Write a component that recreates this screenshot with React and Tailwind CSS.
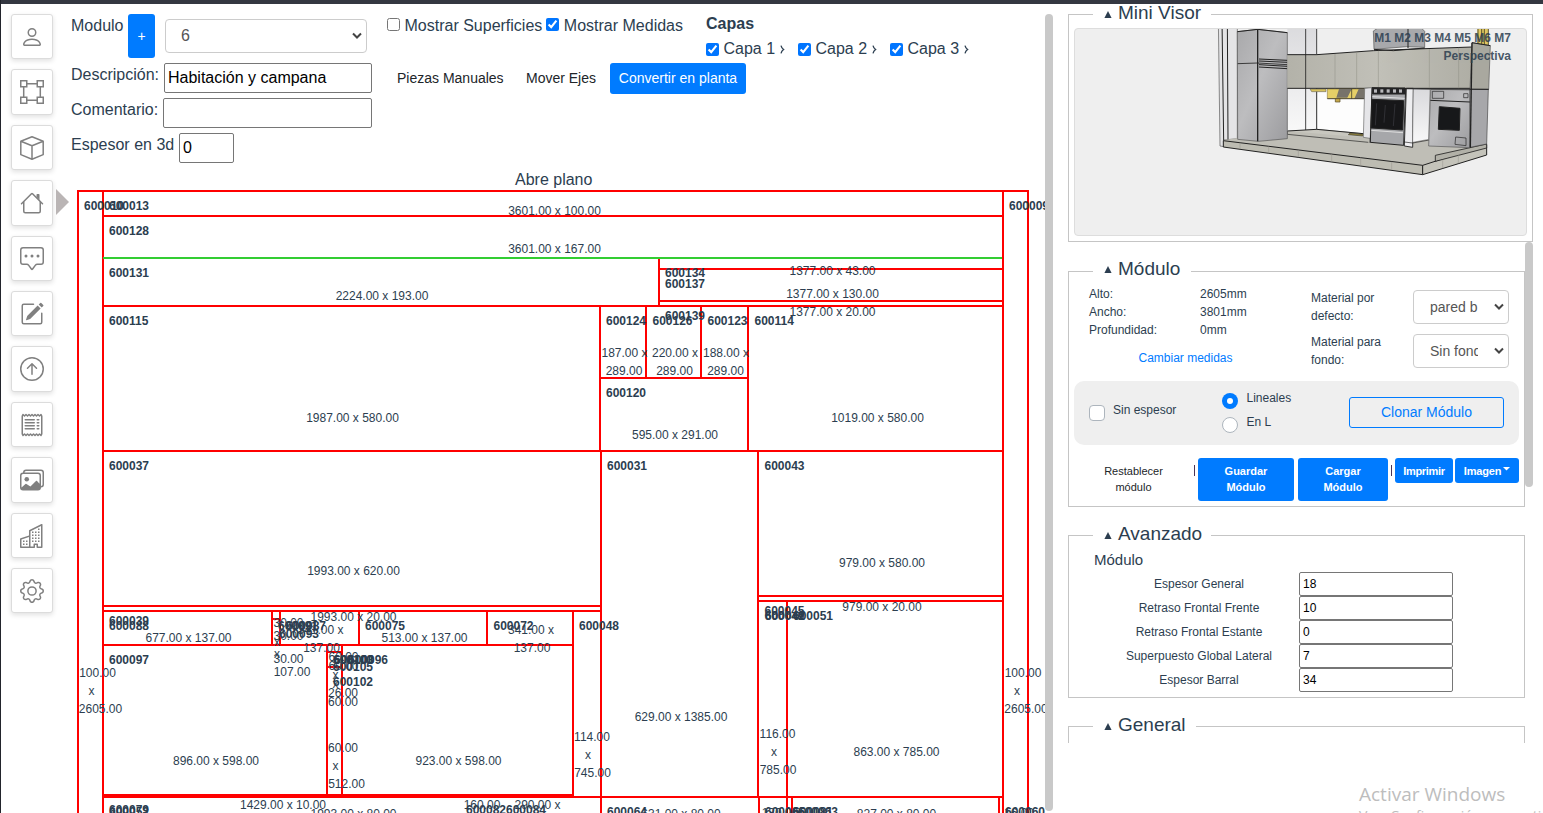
import React from 'react';
import { BsPerson, BsChatSquareDots, BsPencilSquare, BsArrowUpCircle, BsReceipt, BsImages, BsBuildings, BsGear } from 'react-icons/bs';

const VectorIcon = () => (
  <svg width="24" height="24" viewBox="0 0 24 24" fill="none" stroke="currentColor" strokeWidth="1.5">
    <rect x="0.75" y="0.75" width="6" height="6" /><rect x="17.25" y="0.75" width="6" height="6" />
    <rect x="0.75" y="17.25" width="6" height="6" /><rect x="17.25" y="17.25" width="6" height="6" />
    <path d="M6.7 3.7h10.6M6.7 20.3h10.6M3.7 6.7v10.6M20.3 6.7v10.6" />
  </svg>
);

const CubeIcon = () => (
  <svg width="24" height="24" viewBox="0 0 24 24" fill="none" stroke="currentColor" strokeWidth="1.5" strokeLinejoin="round">
    <path d="M12 .8 23.2 5.2v13.4L12 23.2.8 18.6V5.2zM.8 5.2 12 9.7l11.2-4.5M12 9.7v13.5" />
  </svg>
);

const HouseIcon = () => (
  <svg width="24" height="24" viewBox="0 0 16 16" fill="currentColor">
    <path fillRule="evenodd" d="M2 13.5V7h1v6.5a.5.5 0 0 0 .5.5h9a.5.5 0 0 0 .5-.5V7h1v6.5a1.5 1.5 0 0 1-1.5 1.5h-9A1.5 1.5 0 0 1 2 13.5zm11-11V6l-2-2V2.5a.5.5 0 0 1 .5-.5h1a.5.5 0 0 1 .5.5z" />
    <path fillRule="evenodd" d="M7.293 1.5a1 1 0 0 1 1.414 0l6.647 6.646a.5.5 0 0 1-.708.708L8 2.207 1.354 8.854a.5.5 0 1 1-.708-.708L7.293 1.5z" />
  </svg>
);

const TOOLS = [BsPerson, VectorIcon, CubeIcon, HouseIcon, BsChatSquareDots, BsPencilSquare, BsArrowUpCircle, BsReceipt, BsImages, BsBuildings, BsGear];

function Sidebar() {
  return (
    <nav className="flex w-[71px] shrink-0 flex-col gap-[10px] pl-[11px] pt-[10px]">
      {TOOLS.map((Icon, i) => (
        <button key={i} className="relative flex h-[45.4px] w-[42px] shrink-0 items-center justify-center rounded-[3px] border border-[#dcdcdc] bg-white pt-[0.6px] text-[24px] text-[#808080] shadow-[0_2px_5px_rgba(0,0,0,0.12)]">
          <Icon />
          {i === 3 && (
            <svg className="absolute left-[44px] top-[8px]" width="13" height="27" viewBox="0 0 13 27" fill="#bab5b5"><path d="M0 0 13 13 0 26z" /></svg>
          )}
        </button>
      ))}
    </nav>
  );
}

/* [x1, y1, x2, y2] */
const EDGES = [
  [78, 190, 78, 813], [77, 191, 1029, 191], [1028, 190, 1028, 813], [103, 190, 103, 813], [1003, 190, 1003, 813],
  [103, 216, 1003, 216], [659, 258, 659, 306], [659, 269, 1003, 269], [659, 301, 1003, 301], [103, 306, 1003, 306],
  [600, 306, 600, 451], [646, 306, 646, 378], [701, 306, 701, 378], [748, 306, 748, 451], [600, 378, 749, 378],
  [103, 451, 1003, 451], [601, 451, 601, 813], [758, 451, 758, 797], [758, 596, 1003, 596], [758, 601, 1003, 601],
  [787, 601, 787, 797], [103, 606, 601, 606], [103, 611, 601, 611], [103, 645, 573, 645], [272, 611, 272, 645],
  [280, 611, 280, 645], [272, 619, 280, 619], [359, 611, 359, 645], [487, 611, 487, 645], [573, 611, 573, 797],
  [327, 645, 327, 795], [342, 645, 342, 795], [327, 652, 342, 652], [327, 667, 342, 667], [103, 795, 574, 795],
  [103, 797, 1003, 797], [759, 797, 759, 813], [787, 797, 787, 813], [792, 797, 792, 813], [999, 797, 999, 813],
];

/* [left x, centre y, piece code] */
const CODES = [
  [84, 206, '600010'], [109, 206, '600013'], [1009, 206, '600009'], [109, 231, '600128'], [109, 273, '600131'],
  [665, 273, '600134'], [665, 284, '600137'], [665, 316, '600139'], [109, 321, '600115'], [606, 321, '600124'],
  [652.5, 321, '600126'], [707.5, 321, '600123'], [754.5, 321, '600114'], [606, 393, '600120'], [109, 466, '600037'],
  [607, 466, '600031'], [764.5, 466, '600043'], [764.5, 611, '600045'], [764.5, 616, '600049'], [765, 616, '600042'],
  [793, 616, '600051'], [109, 621, '600039'], [109, 626, '600088'], [278, 626, '600091'], [279, 634, '600093'],
  [286, 626, '600087'], [365, 626, '600075'], [493.5, 626, '600072'], [579, 626, '600048'], [109, 660, '600097'],
  [333, 660, '600100'], [334, 660, '600103'], [348, 660, '600096'], [333, 667, '600105'], [333, 682, '600102'],
  [109, 810, '600079'], [109, 812, '600052'], [466, 810, '600082'], [506, 810, '600084'], [607, 812, '600064'],
  [765, 812, '600066'], [793, 812, '600081'], [798, 812, '600063'], [1005, 812, '600060'],
];

/* [centre x, centre y, measure] */
const SIZES = [
  [554.5, 211, '3601.00 x 100.00'], [554.5, 249, '3601.00 x 167.00'], [382, 296, '2224.00 x 193.00'],
  [832.5, 271, '1377.00 x 43.00'], [832.5, 294, '1377.00 x 130.00'], [832.5, 312, '1377.00 x 20.00'],
  [352.5, 418, '1987.00 x 580.00'], [624.5, 353, '187.00 x'], [624, 371, '289.00'], [675, 353, '220.00 x'],
  [674.5, 371, '289.00'], [726, 353, '188.00 x'], [725.5, 371, '289.00'], [675, 435, '595.00 x 291.00'],
  [877.5, 418, '1019.00 x 580.00'], [353.5, 571, '1993.00 x 620.00'], [882, 563, '979.00 x 580.00'],
  [882, 607, '979.00 x 20.00'], [681, 717, '629.00 x 1385.00'], [353.5, 617, '1993.00 x 20.00'],
  [188.5, 638, '677.00 x 137.00'], [424.5, 638, '513.00 x 137.00'], [531, 630, '341.00 x'], [532, 648, '137.00'],
  [320.5, 630, '341.00 x'], [321.5, 648, '137.00'], [288.5, 623, '30.00'], [288.5, 636, '30.00'],
  [277, 642, 'x'], [277, 654, 'x'], [288.5, 659, '30.00'], [292, 672, '107.00'],
  [97.5, 673, '100.00'], [91.5, 691, 'x'], [100.5, 709, '2605.00'], [1023, 673, '100.00'], [1017, 691, 'x'],
  [1026, 709, '2605.00'], [343.5, 657, '60.00'], [343.5, 666, '60.00'], [335.5, 675, 'x'], [335.5, 684, 'x'],
  [343, 693, '26.00'], [343, 702, '60.00'], [343, 748, '60.00'], [335.5, 766, 'x'], [346.5, 784, '512.00'],
  [216, 761, '896.00 x 598.00'], [458.5, 761, '923.00 x 598.00'], [592, 737, '114.00'], [588, 755, 'x'],
  [592.5, 773, '745.00'], [777.5, 734, '116.00'], [774, 752, 'x'], [778, 770, '785.00'], [896.5, 752, '863.00 x 785.00'],
  [283, 805, '1429.00 x 10.00'], [353.5, 814, '1993.00 x 80.00'], [482, 805, '160.00'], [537.5, 805, '290.00 x'],
  [681, 814, '631.00 x 80.00'], [780, 813, '130.00'], [896.5, 814, '827.00 x 80.00'], [1019, 813, '16.00'],
];

function Plan() {
  return (
    <svg className="-ml-[11px] block" width="985" height="623" viewBox="60 190 985 623" fontFamily="Liberation Sans, Arial, sans-serif" fontSize="12" fill="#2c3e50">
      {EDGES.map(([x1, y1, x2, y2], i) => <line key={i} x1={x1} y1={y1} x2={x2} y2={y2} stroke="#ff0000" strokeWidth="2" />)}
      <line x1="103" y1="258" x2="1002" y2="258" stroke="#32cd32" strokeWidth="2" />
      {CODES.map(([x, y, t], i) => <text key={i} x={x} y={y + 4} fontWeight="700">{t}</text>)}
      {SIZES.map(([x, y, t], i) => <text key={i} x={x} y={y + 4} textAnchor="middle">{t}</text>)}
    </svg>
  );
}

function Chevron({ className }) {
  return <svg className={className} width="10" height="8" viewBox="0 0 10 8" fill="none" stroke="#444" strokeWidth="2"><path d="M1 1.5 5 5.5 9 1.5" /></svg>;
}

const Layer = ({ n }) => (
  <label className="flex w-[92px] items-center">
    <input type="checkbox" defaultChecked className="mr-[4.5px] size-[13px]" />Capa {n}
    <svg className="ml-[5px]" width="5" height="9" viewBox="0 0 5 9" fill="none" stroke="currentColor" strokeWidth="1.3"><path d="M1 .7Q1.6 3.2 3.6 4.5 1.6 5.8 1 8.3" /></svg>
  </label>
);

function Header() {
  const field = 'h-[30px] rounded-[2px] border border-[#767676] px-[3px] text-black outline-none';
  const row = 'flex h-[35px] shrink-0';
  return (
    <header className="flex h-[186px] pt-[10px]">
      <div className="flex w-[316px] shrink-0 flex-col">
        <div className="flex h-[49px] shrink-0 items-start">
          <span className="w-[57px] leading-[23px]">Modulo</span>
          <button className="h-[44px] w-[27px] rounded-[3px] bg-[#007bff] text-[14px] text-white">+</button>
          <div className="ml-[10px] mt-[5px] flex h-[34px] w-[202px] items-center justify-between rounded-[4px] border border-[#ccc] pl-[15px] pr-[4px] text-[#555]">6<Chevron /></div>
        </div>
        <div className={row}><span className="w-[93px] leading-[23px]">Descripción:</span><input className={field + ' w-[208px]'} defaultValue="Habitación y campana" /></div>
        <div className={row}><span className="w-[92px] leading-[23px]">Comentario:</span><input className={field + ' w-[209px]'} /></div>
        <div className={row}><span className="w-[108px] leading-[23px]">Espesor en 3d</span><input className={field + ' w-[55px]'} defaultValue="0" /></div>
        <div className="ml-[444px] shrink-0 whitespace-nowrap leading-[23px]">Abre plano</div>
      </div>
      <div className="flex w-[319px] shrink-0 flex-col">
        <div className="flex h-[49px] items-start whitespace-nowrap leading-[23px]">
          <input type="checkbox" className="mt-[4px] size-[13px]" /><span className="ml-[4.5px]">Mostrar Superficies</span>
          <input type="checkbox" defaultChecked className="ml-[4px] mt-[4px] size-[13px]" /><span className="ml-[4.5px]">Mostrar Medidas</span>
        </div>
        <div className="flex h-[31px] w-[359px] items-center whitespace-nowrap pl-[10px] text-[14px] text-[#212529]">
          <span className="w-[129px] shrink-0">Piezas Manuales</span>
          <span className="w-[84px] shrink-0">Mover Ejes</span>
          <button className="h-[31px] w-[136px] shrink-0 rounded-[3px] bg-[#007bff] text-white">Convertir en planta</button>
        </div>
      </div>
      <div className="flex flex-col">
        <strong className="h-[25px] leading-[20px]">Capas</strong>
        <div className="flex whitespace-nowrap leading-[20px]"><Layer n={1} /><Layer n={2} /><Layer n={3} /></div>
      </div>
    </header>
  );
}

const P = ({ d, f = 'none', s = '#222', w = 3 }) => <path d={d} fill={f} stroke={s} strokeWidth={w} />;

function Kitchen() {
  return (
    <svg className="block" width="451" height="206" viewBox="-375 27 1353 618" strokeLinejoin="round">
      <defs>
        <linearGradient id="metal" x1="0" y1="0" x2="1" y2="1"><stop offset="0" stopColor="#a9a9ab" /><stop offset=".45" stopColor="#bdbdbf" /><stop offset="1" stopColor="#9c9c9f" /></linearGradient>
        <linearGradient id="stone" x1="0" y1="0" x2="1" y2="0"><stop offset="0" stopColor="#b3b2a9" /><stop offset=".5" stopColor="#c1c0b8" /><stop offset="1" stopColor="#afaea5" /></linearGradient>
        <linearGradient id="wall" x1="0" y1="0" x2="0" y2="1"><stop offset="0" stopColor="#d9d9dc" /><stop offset="1" stopColor="#f8f8f8" /></linearGradient>
      </defs>
      <P d="M55 0 60 378 72 380 72 360 112 356V0z" f="#e4e4e6" s="#555" w={2} />
      <P d="M66 0 71 362M82 0 84 360" w={3} />
      <P d="M262 0H350V330L262 330z" f="url(#wall)" s="none" />
      <P d="M350 205H500V342L350 328z" f="#fdfdfd" s="#777" w={1.5} />
      <P d="M72 360 262 333 350 328 510 342 690 360 860 372V405L668 463 70 380z" f="#bfbeb6" s="none" />
      <P d="M262 333 350 328 490 341 510 354" f="#c8c7bf" />
      <P d="M262 333V343L505 367" w={2} />
      <P d="M70 362 668 436V464L70 381z" f="#bdbcb2" />
      <P d="M668 436 860 374V405L668 464z" f="#c4c3ba" />
      <P d="M706 424V406L860 372V384L706 424" f="#b2b1a8" w={2.5} />
      <P d="M120 368V387M206 379V400M295 390V412M395 402V425M482 412V437M575 425V449M728 419V445M775 405V430" s="#96958e" w={1.5} />
      <P d="M112 35 173 28 262 38V356L175 364 113 358z" f="url(#metal)" s="#555" w={2} />
      <P d="M173 28V364" w={4} />
      <P d="M112 35 173 28 262 38" w={3} />
      <P d="M113 131 173 129 262 134" w={2.5} />
      <P d="M177 117 262 121M177 123 262 127M177 134 262 139M177 141 262 146" w={3} />
      <P d="M520 33 540 20H660L674 34V82L620 80 522 88z" f="#a9aaac" s="#555" w={2} />
      <P d="M262 104 350 104 520 92 620 88 815 81V205H262z" f="url(#stone)" s="none" />
      <P d="M262 104 350 104 520 92 620 88 815 81M262 205H815" w={3} />
      <P d="M522 88 580 92 674 84M624 27V84" w={3} />
      <P d="M405 102V205M470 97V205M535 92V205M688 87V205M776 83V205" s="#8d8c85" w={1.5} />
      <P d="M317 0V330M350 0V104M350 205V328" w={2.5} />
      <P d="M330 207H378V215H335z" f="#d8c25f" s="#555" w={1.5} />
      <P d="M382 207H494V236H382z" f="#e5cf67" s="#77642e" w={1.5} />
      <P d="M417 207H455L442 233H409zM476 207H494V236H463z" f="#77736a" s="none" />
      <P d="M455 207V236M382 236H494" w={2} />
      <P d="M406 236H420V246H406z" f="#c5a84c" s="#554923" w={2} />
      <P d="M450 339 492 343 488 348 445 344z" f="#8f823c" w={1.5} />
      <P d="M494 205 517 203 510 369 510 355 490 352z" f="#e5e5e8" s="#666" w={2} />
      <P d="M516 203 617 206 611 376 511 367z" f="#a6a7aa" />
      <P d="M518 204H615V222H518z" f="#242426" />
      {[522, 541, 560, 579, 597].map((x) => <rect key={x} x={x} y="208" width="9" height="10" fill="#b8b8bb" />)}
      <P d="M517 230 614 235" s="#e1e1e3" w={3} />
      <P d="M516 238 611 242 608 330 513 324z" f="#171719" />
      <P d="M530 250 526 316M556 255 552 308M585 252 580 318" s="#303035" w={3} />
      <P d="M514 331 609 338" s="#ddd" w={3} />
      <P d="M619 205 640 205 638 382 613 378z" f="#eeeef0" s="#333" w={3} />
      <P d="M640 206 690 208 686 358 638 367z" f="url(#wall)" s="#666" w={1.5} />
      <P d="M613 366 638 369 688 360" w={2} />
      <P d="M692 208 810 210V383L686 378z" f="url(#metal)" s="#555" w={2} />
      <P d="M691 241 810 246" w={3} />
      <P d="M697 214H731V235H697zM791 221H804V233H791zM767 351 798 354V377L765 373z" w={2} />
      <P d="M718 260 780 265 778 331 715 328z" f="#17181a" />
      <P d="M810 207 865 208 860 372 810 382z" f="#a7a7aa" s="#444" w={2} />
      <P d="M832 0H864V75H832z" f="#e0c862" s="none" />
      <P d="M834 27V72M845 27V74M853 27V74M865 27V75" s="#5d522d" w={3} />
      <P d="M816 68 871 77 866 208H810z" f="#a9a89f" s="#555" w={2} />
      <P d="M816 68 811 383" w={4} />
      <P d="M816 68 871 77M600 206 866 208" w={3} />
    </svg>
  );
}

function Legend({ children, className = '' }) {
  return (
    <legend className={'flex h-[20px] items-center whitespace-nowrap pl-[10px] text-[19px] ' + className}>
      <svg className="ml-px mr-[6px] mt-[2px]" width="8" height="7" viewBox="0 0 8 7" fill="currentColor"><path d="M4 0 7.6 7H.4z" /></svg>{children}
    </legend>
  );
}

const FIELDS = [['Espesor General', '18'], ['Retraso Frontal Frente', '10'], ['Retraso Frontal Estante', '0'], ['Superpuesto Global Lateral', '7'], ['Espesor Barral', '34']];

function Panel() {
  const box = 'min-w-0 border border-[#c5c5c5]';
  const select = 'flex h-[34px] w-[96px] items-center justify-between rounded-[4px] border border-[#ccc] pl-[16px] pr-[4px] text-[14px] text-[#555]';
  const action = 'shrink-0 rounded-[3px] bg-[#007bff] text-[11px] font-bold leading-[16px] text-white';
  return (
    <aside className="ml-[15px] w-[465px] shrink-0 text-[12px] leading-[18px]">
      <fieldset className={box + ' h-[238px] w-[465px] px-[5px] pt-[4px]'}>
        <Legend className="ml-[19px] w-[118px] pb-[2px]">Mini Visor</Legend>
        <div className="relative h-[208px] w-[453px] overflow-hidden rounded-[4px] border border-[#ddd] bg-[#efefef]">
          <Kitchen />
          <div className="absolute right-[15px] top-0 text-right font-bold opacity-85">
            <div>M1 M2 M3 M4 M5 M6 M7</div>
            <div>Perspectiva</div>
          </div>
        </div>
      </fieldset>
      <div className="flex h-[501px] overflow-hidden">
        <div className="w-[457px] shrink-0 pt-[19px]">
          <fieldset className={box + ' h-[246px] px-[5px]'}>
            <Legend className="ml-[19px] w-[98px] pb-[5px]">Módulo</Legend>
            <div className="flex h-[100px] pl-[15px] pt-[4px]">
              <div className="w-[222px] shrink-0">
                <div className="grid grid-cols-[111px_1fr]">
                  <span>Alto:</span><span>2605mm</span><span>Ancho:</span><span>3801mm</span><span>Profundidad:</span><span>0mm</span>
                </div>
                <div className="mt-[10px] pl-[49.5px] text-[#007bff]">Cambiar medidas</div>
              </div>
              <div className="grid grid-cols-[102px_96px] content-start gap-y-[8px] pt-[4px]">
                <span className="w-[80px]">Material por defecto:</span>
                <div className={select + ' mt-[1px]'}><span className="w-[50px] overflow-hidden whitespace-nowrap">pared b</span><Chevron /></div>
                <span className="w-[80px]">Material para fondo:</span>
                <div className={select + ' mt-[1px]'}><span className="w-[48px] overflow-hidden whitespace-nowrap">Sin fondo</span><Chevron /></div>
              </div>
            </div>
            <div className="flex h-[64px] w-[445px] items-start rounded-[10px] bg-[#efefef] pl-[15px]">
              <span className="mt-[24px] size-[16px] rounded-[4px] border border-[#adb5bd] bg-white" />
              <span className="ml-[8px] mt-[20px] w-[109px]">Sin espesor</span>
              <div className="w-[127px] pt-[8px]">
                <div className="flex h-[24px]"><span className="mt-[4px] flex size-[16px] items-center justify-center rounded-full bg-[#007bff]"><i className="size-[6px] rounded-full bg-white" /></span><span className="ml-[8.5px]">Lineales</span></div>
                <div className="flex h-[24px]"><span className="mt-[4px] size-[16px] rounded-full border border-[#adb5bd] bg-white" /><span className="ml-[8.5px]">En L</span></div>
              </div>
              <button className="mt-[16px] h-[31px] w-[155px] rounded-[3px] border border-[#007bff] pb-px text-[14px] text-[#007bff]">Clonar Módulo</button>
            </div>
            <div className="flex w-[445px] items-start pt-[13px]">
              <span className="w-[119px] shrink-0 pt-[5px] text-center text-[11px] leading-[16px] text-[#212529]">Restablecer<br />módulo</span>
              <span className="ml-[1px] mt-[7px] h-[11px] w-px shrink-0 bg-[#4b3556]" />
              <button className={action + ' ml-[3px] h-[43px] w-[96px] pb-px'}>Guardar<br />Módulo</button>
              <button className={action + ' ml-[4px] h-[43px] w-[90px] pb-px'}>Cargar<br />Módulo</button>
              <span className="ml-[3px] mt-[7px] h-[11px] w-px shrink-0 bg-[#4b3556]" />
              <button className={action + ' ml-[3px] h-[25px] w-[58px] tracking-[-0.3px]'}>Imprimir</button>
              <button className={action + ' ml-[2px] flex h-[25px] w-[64px] items-center justify-center gap-[2px] tracking-[-0.2px]'}>Imagen<svg className="-mt-[3px]" width="7" height="4" viewBox="0 0 7 4" fill="currentColor"><path d="M0 0h7L3.5 3.5z" /></svg></button>
            </div>
          </fieldset>
          <fieldset className={box + ' mt-[18px] h-[173px]'}>
            <Legend className="ml-[24px] w-[118px] pb-[2px]">Avanzado</Legend>
            <div className="pl-[25px] pt-[5px] text-[15px] leading-[20px]">Módulo</div>
            <div className="mt-[2px]">
              {FIELDS.map(([label, value]) => (
                <div key={label} className="flex h-[24px] items-center pl-[30px]">
                  <span className="w-[200px] text-center">{label}</span>
                  <input className="h-[24px] w-[154px] rounded-[2px] border border-[#767676] px-[3px] text-[12px] text-black outline-none" defaultValue={value} />
                </div>
              ))}
            </div>
          </fieldset>
          <fieldset className={box + ' mt-[18px] h-[100px]'}>
            <Legend className="ml-[24px] w-[103px] pb-[2px]">General</Legend>
          </fieldset>
        </div>
        <div className="h-[245px] w-[8px] rounded-[4px] bg-[#c9c9c9]" />
      </div>
    </aside>
  );
}

export default function App() {
  return (
    <div className="relative h-[813px] w-[1543px] overflow-hidden border-l border-[#22242c] bg-white font-['Liberation_Sans',Arial,sans-serif] text-[16px] text-[#2c3e50]">
      <div className="h-[4px] bg-[#343741]" />
      <div className="-ml-px flex">
        <Sidebar />
        <main className="w-[974px] shrink-0"><Header /><Plan /></main>
        <div className="mt-[10px] h-[797px] w-[8px] shrink-0 rounded-[4px] bg-[#c9c9c9]" />
        <Panel />
      </div>
      <div className="absolute left-[1358px] top-[781px] whitespace-nowrap font-['Open_Sans',sans-serif] text-[#bdbdbd]">
        <div className="text-[19px] leading-[26px]">Activar Windows</div>
        <div className="text-[14px] leading-[18px]">Ve a Configuración para activar</div>
      </div>
    </div>
  );
}
